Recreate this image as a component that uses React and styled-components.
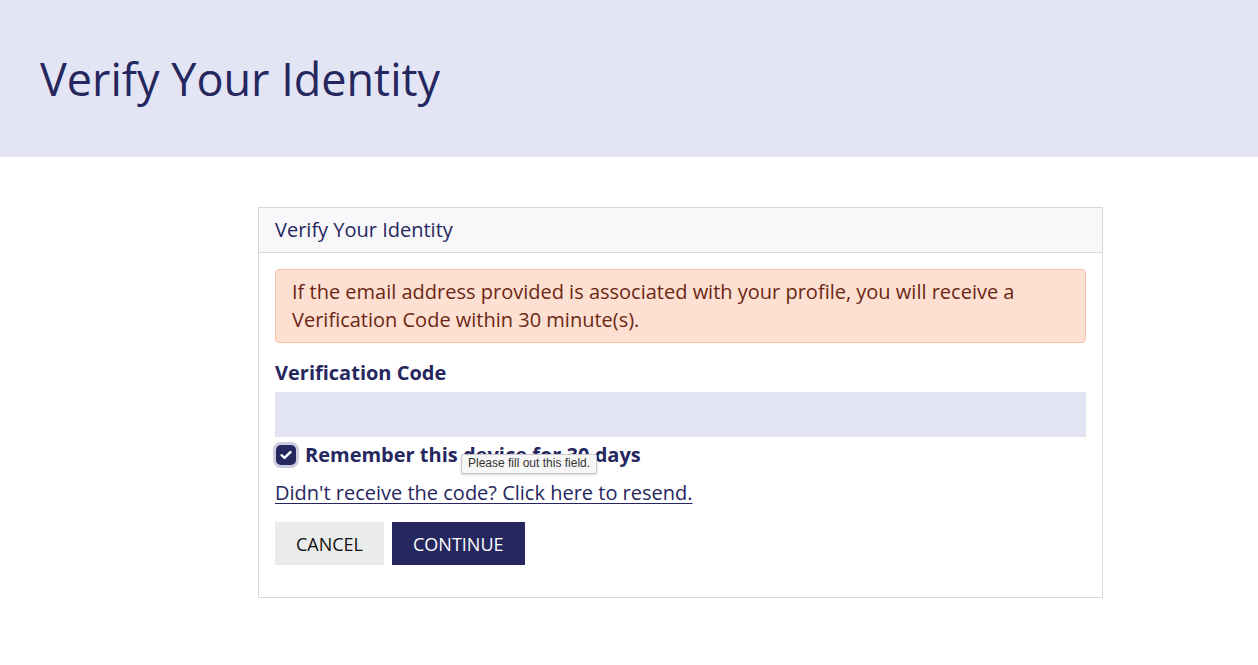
import React from "react";
import styled, { createGlobalStyle } from "styled-components";

const Global = createGlobalStyle`
  html, body { margin: 0; padding: 0; background: #ffffff; }
  body { font-family: "Open Sans", "Noto Sans", sans-serif; color: #25275e; }
  * { box-sizing: border-box; }
`;

const Banner = styled.header`
  height: 157px;
  background: #e3e5f4;
  display: flex;
  align-items: center;
  padding: 0 40px;
`;

const PageTitle = styled.h1`
  margin: 0;
  font-size: 45px;
  font-weight: 400;
  color: #25275e;
  line-height: 1.2;
`;

const Main = styled.main`
  display: flex;
  padding: 50px 0 0 258px;
`;

const Card = styled.section`
  width: 845px;
  border: 1px solid #d9d9dc;
  background: #fff;
`;

const CardHeader = styled.div`
  background: #f8f8fa;
  border-bottom: 1px solid #d9d9dc;
  padding: 8px 16px 9px;
  font-size: 20px;
  line-height: 27px;
  color: #25275e;
`;

const CardBody = styled.div`
  padding: 16px 16px 32px;
  display: flex;
  flex-direction: column;
`;

const Alert = styled.div`
  background: #fee0d2;
  border: 1px solid #f8c4a8;
  border-radius: 4px;
  padding: 8px 16px;
  font-size: 20px;
  line-height: 28px;
  color: #6b2713;
`;

const Label = styled.label`
  margin-top: 16px;
  font-size: 20px;
  font-weight: 700;
  line-height: 27px;
  color: #25275e;
`;

const Input = styled.input`
  margin-top: 6px;
  height: 45px;
  width: 100%;
  border: none;
  background: #e2e4f3;
  outline: none;
  font-family: inherit;
  font-size: 18px;
  padding: 0 12px;
`;

const CheckRow = styled.div`
  position: relative;
  display: flex;
  align-items: center;
  gap: 9px;
  margin-top: 6px;
  height: 24px;
`;

const CheckBox = styled.span`
  width: 20px;
  height: 20px;
  border-radius: 5px;
  background: #25275e;
  box-shadow: 0 0 0 3px #cdcde0;
  display: flex;
  align-items: center;
  justify-content: center;
  margin-left: 1px;
`;

const CheckText = styled.span`
  font-size: 20px;
  font-weight: 700;
  color: #25275e;
  line-height: 24px;
`;

const Tooltip = styled.div`
  position: absolute;
  left: 186px;
  top: 11px;
  background: #f6f6f6;
  border: 1px solid #c9c9c9;
  border-radius: 2px;
  box-shadow: 0 1px 2px rgba(0,0,0,0.18);
  padding: 2px 6px 3px;
  font-family: "Liberation Sans", Arial, sans-serif;
  font-size: 12px;
  line-height: 13px;
  color: #333;
  white-space: nowrap;
`;

const ResendLink = styled.a`
  margin-top: 12px;
  font-size: 20px;
  line-height: 27px;
  color: #25275e;
  text-decoration: underline;
  text-underline-offset: 3px;
  text-decoration-thickness: 1px;
  align-self: flex-start;
  cursor: pointer;
`;

const Actions = styled.div`
  margin-top: 16px;
  display: flex;
  gap: 8px;
`;

const Button = styled.button`
  height: 43px;
  border: none;
  border-radius: 0;
  padding: 0 21px;
  font-family: "Open Sans", sans-serif;
  font-size: 18px;
  text-transform: uppercase;
  cursor: pointer;
  background: ${(p) => (p.$primary ? "#25275e" : "#eaebeb")};
  color: ${(p) => (p.$primary ? "#ffffff" : "#111111")};
`;

export default function App() {
  return (
    <>
      <Global />
      <Banner>
        <PageTitle>Verify Your Identity</PageTitle>
      </Banner>
      <Main>
        <Card>
          <CardHeader>Verify Your Identity</CardHeader>
          <CardBody>
            <Alert>
              If the email address provided is associated with your profile, you will receive a
              <br />
              Verification Code within 30 minute(s).
            </Alert>
            <Label htmlFor="code">Verification Code</Label>
            <Input id="code" type="text" />
            <CheckRow>
              <CheckBox>
                <svg width="12" height="10" viewBox="0 0 12 10">
                  <path d="M1.6 5.2 L4.5 7.9 L10.4 2.1" fill="none" stroke="#fff" strokeWidth="2.4" strokeLinecap="round" strokeLinejoin="round" />
                </svg>
              </CheckBox>
              <CheckText>Remember this device for 30 days</CheckText>
              <Tooltip>Please fill out this field.</Tooltip>
            </CheckRow>
            <ResendLink>Didn't receive the code? Click here to resend.</ResendLink>
            <Actions>
              <Button>Cancel</Button>
              <Button $primary>Continue</Button>
            </Actions>
          </CardBody>
        </Card>
      </Main>
    </>
  );
}
